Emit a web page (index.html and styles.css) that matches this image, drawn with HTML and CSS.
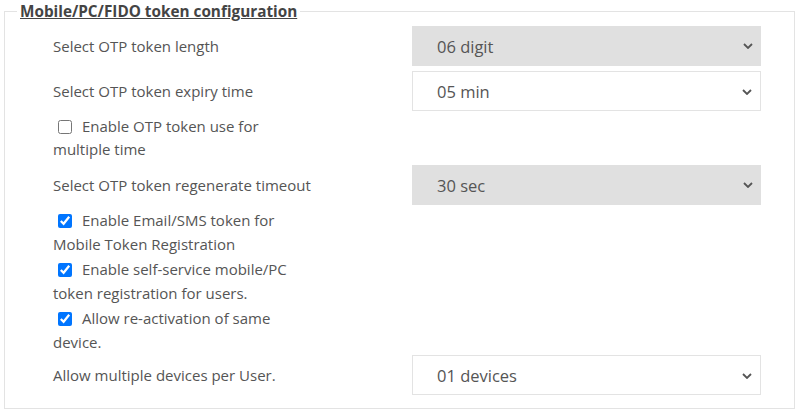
FILE: index.html
```html
<!DOCTYPE html>
<html>
<head>
<meta charset="utf-8">
<link rel="stylesheet" href="styles.css">
</head>
<body>
<fieldset class="box">
  <legend class="legend">Mobile/PC/FIDO token configuration</legend>

  <div class="row row-1">
    <label class="lbl">Select OTP token length</label>
    <div class="sel grey"><span class="val">06 digit</span><svg class="chev" viewBox="0 0 10 6" width="10" height="6"><path d="M1 1 L5 5 L9 1" fill="none" stroke="#555" stroke-width="1.8"/></svg></div>
  </div>

  <div class="row row-2">
    <label class="lbl">Select OTP token expiry time</label>
    <div class="sel white"><span class="val">05 min</span><svg class="chev" viewBox="0 0 10 6" width="10" height="6"><path d="M1 1 L5 5 L9 1" fill="none" stroke="#555" stroke-width="1.8"/></svg></div>
  </div>

  <div class="check c-1">
    <label class="cl"><input type="checkbox" class="cb"> Enable OTP token use for multiple time</label>
  </div>

  <div class="row row-3">
    <label class="lbl">Select OTP token regenerate timeout</label>
    <div class="sel grey"><span class="val">30 sec</span><svg class="chev" viewBox="0 0 10 6" width="10" height="6"><path d="M1 1 L5 5 L9 1" fill="none" stroke="#555" stroke-width="1.8"/></svg></div>
  </div>

  <div class="check c-2">
    <label class="cl"><input type="checkbox" class="cb" checked> Enable Email/SMS token for Mobile Token Registration</label>
  </div>
  <div class="check">
    <label class="cl"><input type="checkbox" class="cb" checked> Enable self-service mobile/PC token registration for users.</label>
  </div>
  <div class="check">
    <label class="cl"><input type="checkbox" class="cb" checked> Allow re-activation of same device.</label>
  </div>

  <div class="row row-4">
    <label class="lbl">Allow multiple devices per User.</label>
    <div class="sel white"><span class="val">01 devices</span><svg class="chev" viewBox="0 0 10 6" width="10" height="6"><path d="M1 1 L5 5 L9 1" fill="none" stroke="#555" stroke-width="1.8"/></svg></div>
  </div>
</fieldset>
</body>
</html>
```

FILE: styles.css
```css
html, body {
  margin: 0;
  padding: 0;
  background: #fff;
}
body {
  padding: 1px 5px 0 4px;
  font-family: "Open Sans", "Noto Sans", sans-serif;
  color: #555;
  font-size: 15px;
}
.box {
  margin: 0;
  border: 1px solid #e3e3e3;
  padding: 5px 33px 13px 48px;
  min-width: 0;
}
.legend {
  padding: 0 3px;
  margin-left: -36px;
  font-weight: bold;
  font-size: 15.3px;
  line-height: 20px;
  color: #444;
  text-decoration: underline;
}
.row {
  display: flex;
  align-items: center;
  justify-content: space-between;
}
.lbl {
  flex: 0 0 auto;
}
.sel {
  position: relative;
  width: 349px;
  height: 40px;
  box-sizing: border-box;
  display: flex;
  align-items: center;
  padding-left: 25px;
  font-size: 16.5px;
  color: #555;
}
.sel.grey {
  background: #e0e0e0;
}
.sel.white {
  background: #fff;
  border: 1px solid #e3e3e3;
  padding-left: 24px;
}
.chev {
  position: absolute;
  right: 8px;
  top: 17px;
}
.row-2 { margin-top: 5px; }
.row-3 { margin-top: 4px; }
.row-4 { margin-top: 1px; }
.check {
  width: 245px;
  line-height: 24px;
  margin-top: 1px;
}
.c-1 { margin-top: 4px; line-height: 23px; }
.c-2 { margin-top: 3px; }
.cl {
  display: block;
}
.cb {
  width: 14px;
  height: 14px;
  margin: 0 6px 0 5px;
  vertical-align: -2px;
}
```
